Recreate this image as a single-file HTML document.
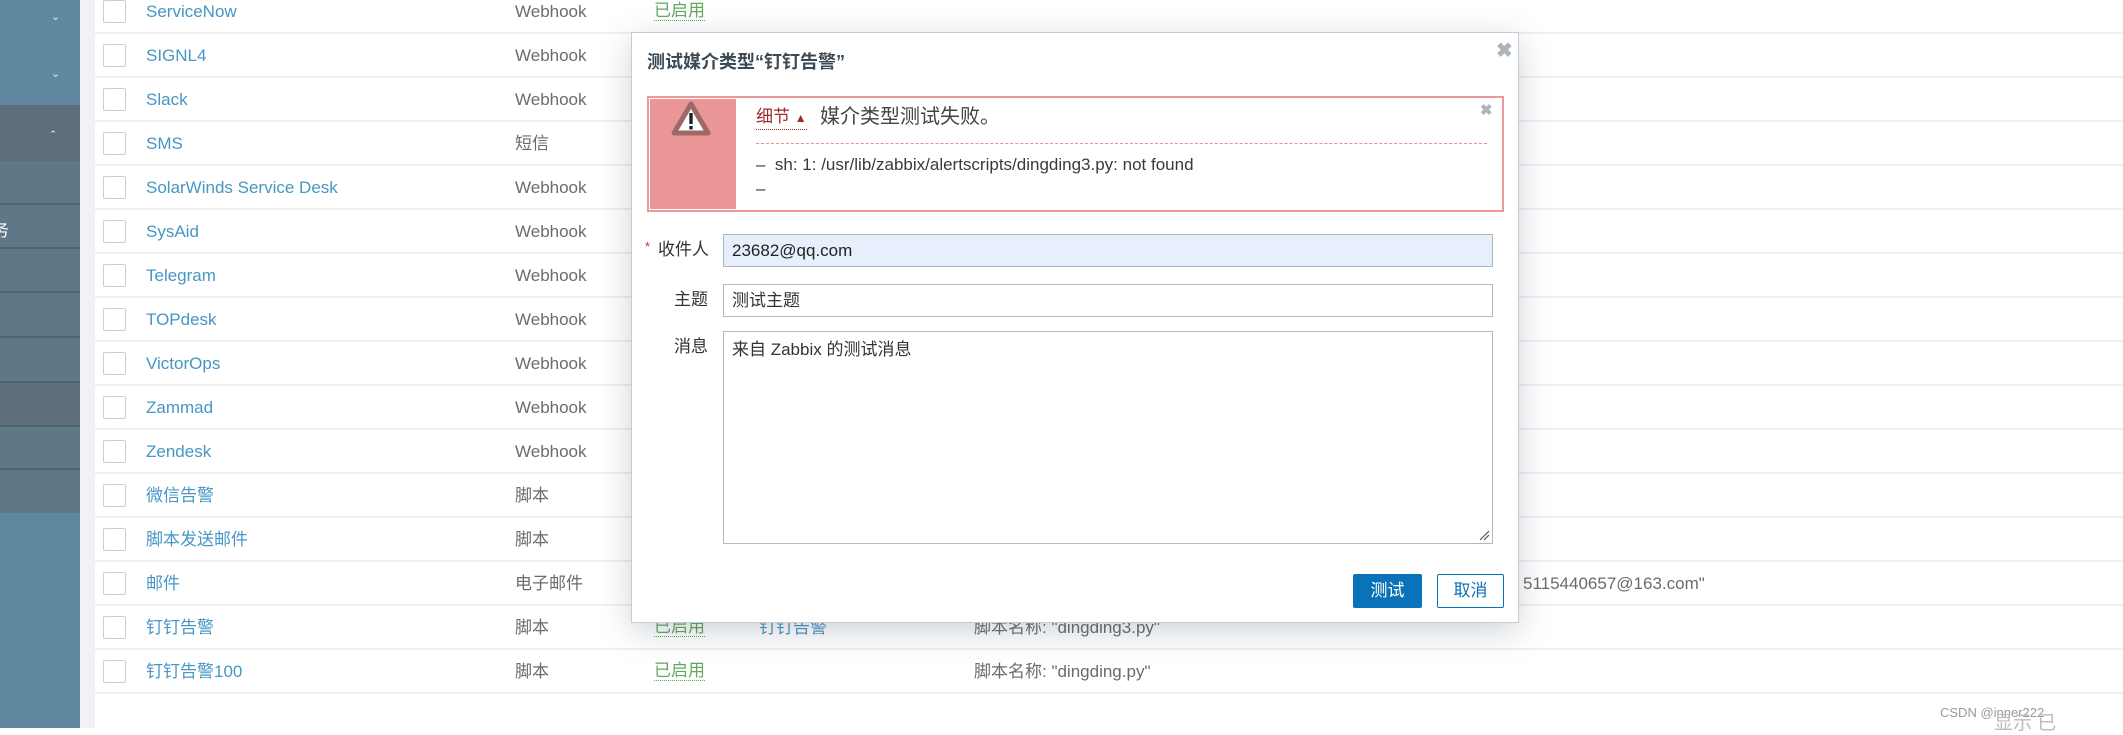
<!DOCTYPE html>
<html><head><meta charset="utf-8"><style>
*{margin:0;padding:0;box-sizing:border-box}
body{width:2123px;height:728px;overflow:hidden;background:#fff;font-family:"Liberation Sans","Noto Sans CJK SC",sans-serif;position:relative}
.abs{position:absolute}
.sb{left:0;top:0;width:80px;height:728px;background:#5f87a0}
.strip{left:80px;top:0;width:15px;height:728px;background:#f0f2f5}
.row{position:absolute;left:95px;width:2028px;height:44px;border-bottom:2px solid #eef0f2}
.cb{position:absolute;left:8px;top:-1px;width:23px;height:23px;border:1px solid #c8d0d6;border-radius:2px;background:#fff}
.t{position:absolute;font-size:17px;line-height:20px;white-space:nowrap}
.lk{color:#4796c4}.gr{color:#6b6b6b}.en{color:#62a85f;border-bottom:1px dotted #62a85f;line-height:18px}
.sep{position:absolute;left:0;width:80px;height:2px;background:#52636e}
</style></head><body>
<div class="abs sb"></div>
<div class="abs" style="left:0;top:105px;width:80px;height:56px;background:#5d6f7b"></div>
<div class="abs" style="left:0;top:161px;width:80px;height:352px;background:#5e7888"></div>
<div class="abs" style="left:0;top:382px;width:80px;height:44px;background:#5d6f7b"></div>
<div class="sep" style="top:203px"></div>
<div class="sep" style="top:247px"></div>
<div class="sep" style="top:291px"></div>
<div class="sep" style="top:336px"></div>
<div class="sep" style="top:381px"></div>
<div class="sep" style="top:425px"></div>
<div class="sep" style="top:468px"></div>
<div class="abs" style="left:51px;top:10px;color:#dfe8ee;font-size:11px">&#8964;</div>
<div class="abs" style="left:51px;top:67px;color:#dfe8ee;font-size:11px">&#8964;</div>
<div class="abs" style="left:51px;top:128px;color:#fff;font-size:13px">&#710;</div>
<div class="abs" style="left:-8px;top:216px;color:#fff;font-size:17px">务</div>
<div class="abs strip"></div>
<div id="rows"></div>
<script>
var R=[["ServiceNow","Webhook",1],["SIGNL4","Webhook"],["Slack","Webhook"],["SMS","短信"],["SolarWinds Service Desk","Webhook"],["SysAid","Webhook"],["Telegram","Webhook"],["TOPdesk","Webhook"],["VictorOps","Webhook"],["Zammad","Webhook"],["Zendesk","Webhook"],["微信告警","脚本"],["脚本发送邮件","脚本"],["邮件","电子邮件",0,"","5115440657@163.com\""],["钉钉告警","脚本",1,"钉钉告警","脚本名称: \"dingding3.py\""],["钉钉告警100","脚本",1,"","脚本名称: \"dingding.py\""]];
var h="";
R.forEach(function(r,i){var top=-10+44*i;
h+='<div class="row" style="top:'+top+'px"><div class="cb" style="top:10px"></div><div class="t lk" style="left:51px;top:12px">'+r[0]+'</div><div class="t gr" style="left:420px;top:12px">'+r[1]+'</div>'+(r[2]?'<div class="t en" style="left:559px;top:12px">已启用</div>':'')+(r[3]?'<div class="t lk" style="left:664px;top:12px">'+r[3]+'</div>':'')+(r[4]?'<div class="t gr" style="left:'+(i==13?1428:879)+'px;top:12px">'+r[4]+'</div>':'')+'</div>';});
document.getElementById("rows").innerHTML=h;
</script>
<div class="abs" style="left:1940px;top:705px;font-size:13px;color:#999">CSDN @inner222</div>
<div class="abs" style="left:1994px;top:708px;font-size:19px;color:#bbb">显示 已</div>

<div class="abs" style="left:631px;top:32px;width:888px;height:591px;background:#fff;border:1px solid #c5cdd3;box-shadow:0 8px 30px rgba(60,80,100,.25)"></div>
<div class="abs" style="left:647px;top:50px;font-size:18px;font-weight:bold;color:#3b4a55;line-height:24px">测试媒介类型“钉钉告警”</div>
<div class="abs" style="left:1496px;top:38px;font-size:20px;font-weight:bold;color:#aab5bd">&#10006;</div>
<div class="abs" style="left:647px;top:96px;width:857px;height:116px;border:2px solid #ec9898;background:#fff"></div>
<div class="abs" style="left:650px;top:99px;width:86px;height:110px;background:#eb9696"></div>
<svg class="abs" style="left:670px;top:100px" width="42" height="38" viewBox="0 0 42 38"><path d="M21 4 L38 33 L4 33 Z" fill="#fff" stroke="#9d6868" stroke-width="5" stroke-linejoin="round"/><rect x="19.3" y="13" width="3.4" height="11" fill="#222"/><rect x="19.3" y="26" width="3.4" height="3.4" fill="#222"/></svg>
<div class="abs" style="left:756px;top:106px;font-size:17px;color:#9b2a2a;border-bottom:1px dotted #9b2a2a;line-height:22px">细节 <span style="font-size:12px">&#9650;</span></div>
<div class="abs" style="left:820px;top:104px;font-size:20px;color:#444;line-height:26px">媒介类型测试失败。</div>
<div class="abs" style="left:1480px;top:101px;font-size:15px;font-weight:bold;color:#aab5bd">&#10006;</div>
<div class="abs" style="left:756px;top:143px;width:731px;border-top:1px dashed #ec8f8f"></div>
<div class="abs" style="left:756px;top:155px;font-size:17px;color:#3a3a3a;line-height:20px">–&nbsp; sh: 1: /usr/lib/zabbix/alertscripts/dingding3.py: not found</div>
<div class="abs" style="left:756px;top:179px;font-size:17px;color:#3a3a3a;line-height:20px">–</div>

<div class="abs" style="left:645px;top:240px;font-size:13px;color:#d03030;line-height:14px">*</div>
<div class="abs" style="left:658px;top:240px;font-size:17px;color:#333;line-height:20px">收件人</div>
<div class="abs" style="left:723px;top:234px;width:770px;height:33px;background:#e8effc;border:1px solid #a8b7c3;font-size:17px;color:#222;padding:6px 8px;line-height:20px">23682@qq.com</div>
<div class="abs" style="left:674px;top:290px;font-size:17px;color:#333;line-height:20px">主题</div>
<div class="abs" style="left:723px;top:284px;width:770px;height:33px;border:1px solid #b0bcc5;font-size:17px;color:#333;padding:6px 8px;line-height:20px">测试主题</div>
<div class="abs" style="left:674px;top:337px;font-size:17px;color:#333;line-height:20px">消息</div>
<div class="abs" style="left:723px;top:331px;width:770px;height:213px;border:1px solid #b0bcc5;font-size:17px;color:#333;padding:8px 8px;line-height:20px">来自 Zabbix 的测试消息</div>
<svg class="abs" style="left:1478px;top:529px" width="12" height="12"><path d="M2 11 L11 2 M6 11 L11 6" stroke="#555" stroke-width="1.2"/></svg>
<div class="abs" style="left:1353px;top:574px;width:69px;height:34px;background:#0a72b8;border-radius:2px;color:#fff;font-size:17px;text-align:center;line-height:34px">测试</div>
<div class="abs" style="left:1437px;top:574px;width:67px;height:34px;border:1px solid #0a72b8;border-radius:2px;color:#0a72b8;font-size:17px;text-align:center;line-height:32px">取消</div>
</body></html>
